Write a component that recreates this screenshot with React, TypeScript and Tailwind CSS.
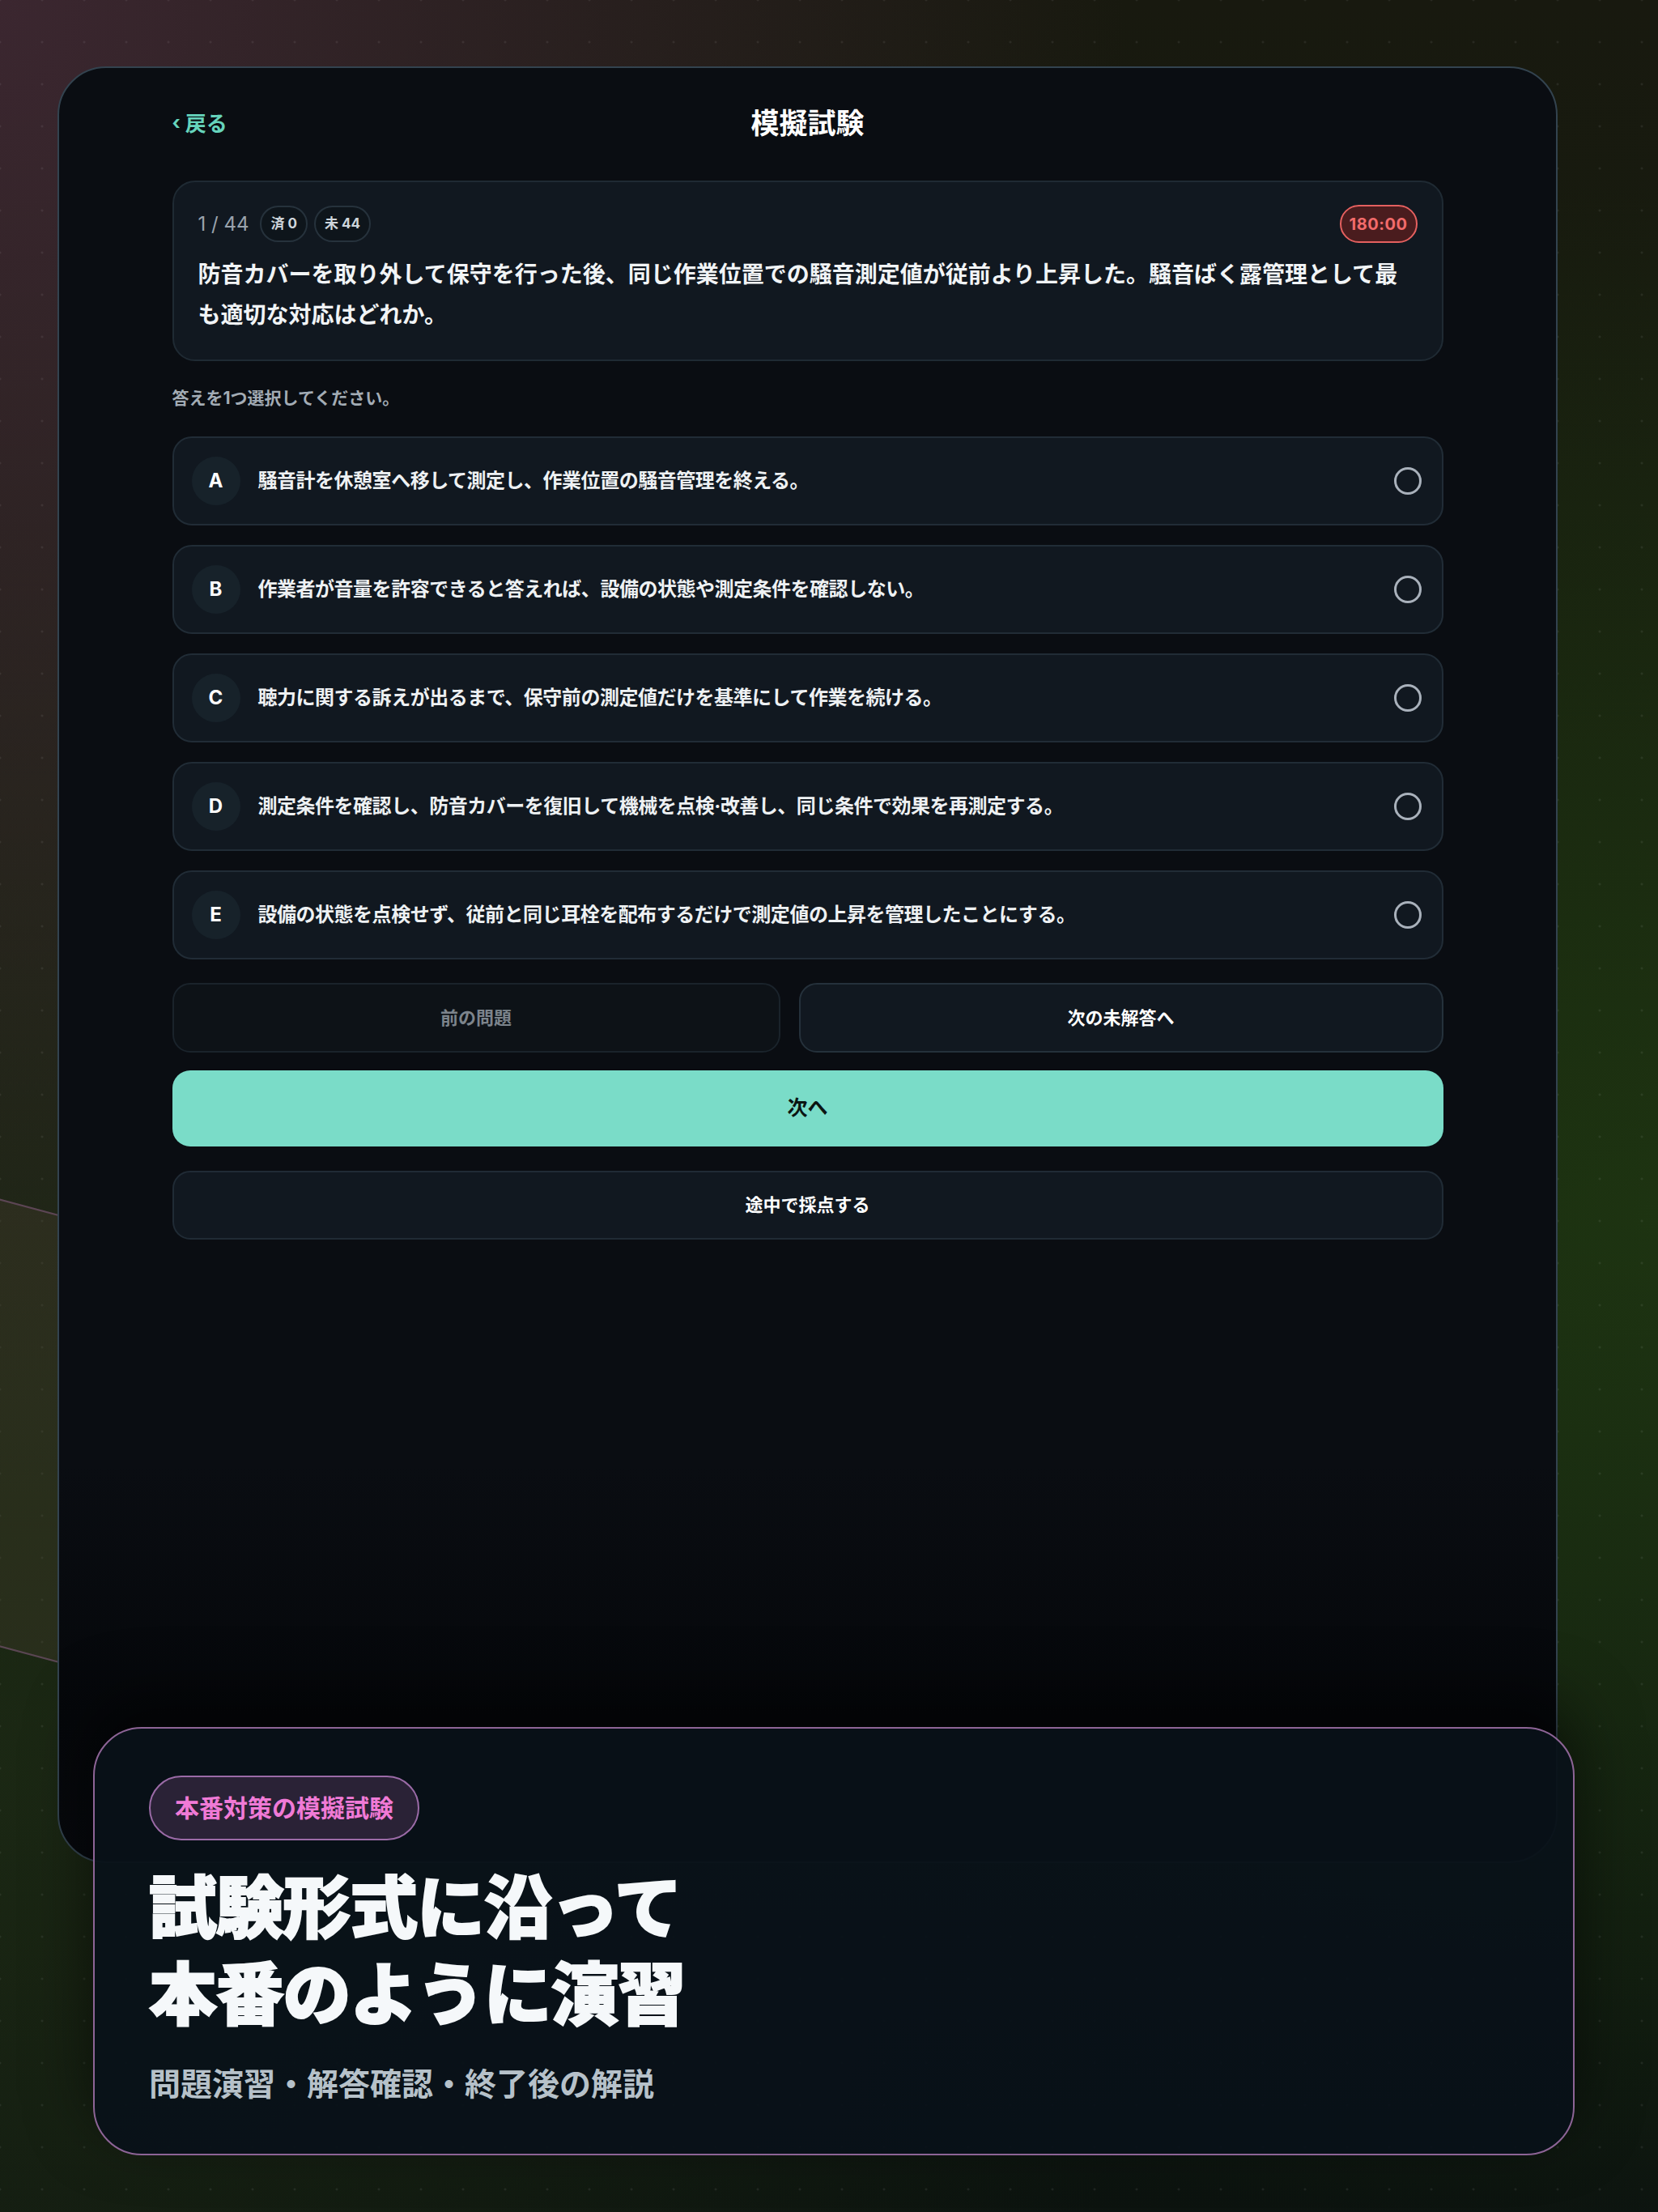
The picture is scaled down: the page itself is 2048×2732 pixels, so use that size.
const font = "font-[Inter,'Noto_Sans_CJK_JP',sans-serif]";

const options = [
  { key: "A", text: "騒音計を休憩室へ移して測定し、作業位置の騒音管理を終える。" },
  { key: "B", text: "作業者が音量を許容できると答えれば、設備の状態や測定条件を確認しない。" },
  { key: "C", text: "聴力に関する訴えが出るまで、保守前の測定値だけを基準にして作業を続ける。" },
  { key: "D", text: "測定条件を確認し、防音カバーを復旧して機械を点検·改善し、同じ条件で効果を再測定する。" },
  { key: "E", text: "設備の状態を点検せず、従前と同じ耳栓を配布するだけで測定値の上昇を管理したことにする。" },
];

function OptionRow({ k, text }: { k: string; text: string }) {
  return (
    <button className="flex h-[110px] w-full items-center rounded-[24px] border-2 border-[#212c36] bg-[#111820] pl-[22px] pr-[25px] text-left">
      <span className="flex h-[60px] w-[60px] shrink-0 items-center justify-center rounded-full bg-[#17222a] text-[24px] font-bold text-white">
        {k}
      </span>
      <span className="ml-[22px] flex-1 text-[24px] font-bold tracking-[-0.02em] text-[#eef1f3]">{text}</span>
      <span className="h-[34px] w-[34px] shrink-0 rounded-full border-[3px] border-[#a9b1bb]" />
    </button>
  );
}

export default function App() {
  return (
    <div
      className={`relative h-[2732px] w-[2048px] overflow-hidden bg-[radial-gradient(ellipse_at_0%_0%,rgba(68,42,56,0.8),transparent_48%),radial-gradient(ellipse_at_100%_55%,rgba(32,58,18,0.75),transparent_60%),radial-gradient(ellipse_at_0%_80%,rgba(34,48,22,0.6),transparent_50%),linear-gradient(180deg,#18190f_0%,#161f0e_45%,#142010_65%,#0c130f_100%)] ${font}`}
    >
      {/* dotted grid */}
      <div className="pointer-events-none absolute inset-0 bg-[radial-gradient(circle,rgba(255,255,255,0.07)_1.2px,transparent_1.8px)] bg-[size:52px_52px] bg-[position:26px_26px]" />
      {/* tilted band on the left */}
      <div className="pointer-events-none absolute left-[-600px] top-[1490px] h-[535px] w-[1200px] rotate-[15deg] border-2 border-[rgba(150,100,150,0.45)] bg-[rgba(70,62,48,0.32)]" />

      {/* device frame */}
      <div className="relative z-10 ml-[71px] mt-[82px] h-[2219px] w-[1853px] rounded-[60px] border-2 border-[#33434f] bg-[linear-gradient(180deg,#0a0d12_0%,#0a0d12_78%,#05070a_92%,#07090d_100%)]">
        <div className="mx-auto w-[1570px] pt-[38px]">
          {/* header */}
          <div className="grid h-[60px] grid-cols-[1fr_auto_1fr] items-center">
            <button className="flex items-center gap-[6px] justify-self-start text-[26px] font-bold text-[#66d4bc]">
              <span className="text-[24px]">‹</span>
              <span>戻る</span>
            </button>
            <h1 className="text-[35px] font-bold text-white">模擬試験</h1>
            <div />
          </div>

          {/* question card */}
          <div className="mt-[41px] rounded-[28px] border-2 border-[#1f2a33] bg-[#111820] px-[30px] pb-[30px] pt-[28px]">
            <div className="flex h-[47px] items-center justify-between">
              <div className="flex items-center">
                <span className="text-[24px] text-[#9aa3ad]">1 / 44</span>
                <span className="ml-[14px] flex h-[45px] items-center rounded-full border-2 border-[#26323c] bg-[#0e151b] px-[11px] text-[17px] font-bold text-[#cfd6dc]">
                  済 0
                </span>
                <span className="ml-[8px] flex h-[45px] items-center rounded-full border-2 border-[#26323c] bg-[#0e151b] px-[11px] text-[17px] font-bold text-[#cfd6dc]">
                  未 44
                </span>
              </div>
              <span className="flex h-[47px] w-[96px] items-center justify-center rounded-full border-2 border-[#e5605f] bg-[#4a1c1e] text-[20px] font-bold tracking-wide text-[#f26b6b]">
                180:00
              </span>
            </div>
            <p className="mt-[14px] text-[28px] font-bold leading-[50px] text-[#f1f4f6]">
              防音カバーを取り外して保守を行った後、同じ作業位置での騒音測定値が従前より上昇した。騒音ばく露管理として最も適切な対応はどれか。
            </p>
          </div>

          <p className="mt-[31px] text-[21px] font-bold leading-[30px] text-[#a3acb5]">答えを1つ選択してください。</p>

          {/* options */}
          <div className="mt-[32px] flex flex-col gap-[24px]">
            {options.map((o) => (
              <OptionRow key={o.key} k={o.key} text={o.text} />
            ))}
          </div>

          {/* nav buttons */}
          <div className="mt-[29px] flex gap-[23px]">
            <button className="h-[86px] w-[751px] rounded-[22px] border-2 border-[#1a232b] bg-[#0d1217] text-[22px] font-bold text-[#7c848c]">
              前の問題
            </button>
            <button className="h-[86px] flex-1 rounded-[22px] border-2 border-[#25313b] bg-[#111820] text-[22px] font-bold text-white">
              次の未解答へ
            </button>
          </div>

          <button className="mt-[22px] h-[94px] w-full rounded-[22px] bg-[#7adcc8] text-[25px] font-bold text-[#0b1512]">
            次へ
          </button>

          <button className="mt-[30px] h-[85px] w-full rounded-[22px] border-2 border-[#202b35] bg-[#111820] text-[22px] font-bold text-white">
            途中で採点する
          </button>
        </div>
      </div>

      {/* promo overlay card */}
      <div className="absolute left-[115px] top-[2133px] z-20 h-[529px] w-[1830px] rounded-[60px] border-2 border-[#8d6496] bg-[rgba(8,17,24,0.94)] px-[67px] pt-[58px] shadow-[0_-30px_80px_rgba(0,0,0,0.55)]">
        <span className="inline-flex h-[80px] items-center rounded-full border-2 border-[#9b6ba7] bg-[#2a2236] px-[30px] text-[30px] font-bold text-[#f07ad6]">
          本番対策の模擬試験
        </span>
        <h2 className="mt-[30px] text-[84px] font-black leading-[107px] tracking-[-0.015em] text-[#f5f8fa] [-webkit-text-stroke:2px_#f5f8fa]">
          試験形式に沿って
          <br />
          本番のように演習
        </h2>
        <p className="mt-[32px] text-[39px] font-bold leading-[50px] text-[#b6c1c9]">問題演習・解答確認・終了後の解説</p>
      </div>
    </div>
  );
}
